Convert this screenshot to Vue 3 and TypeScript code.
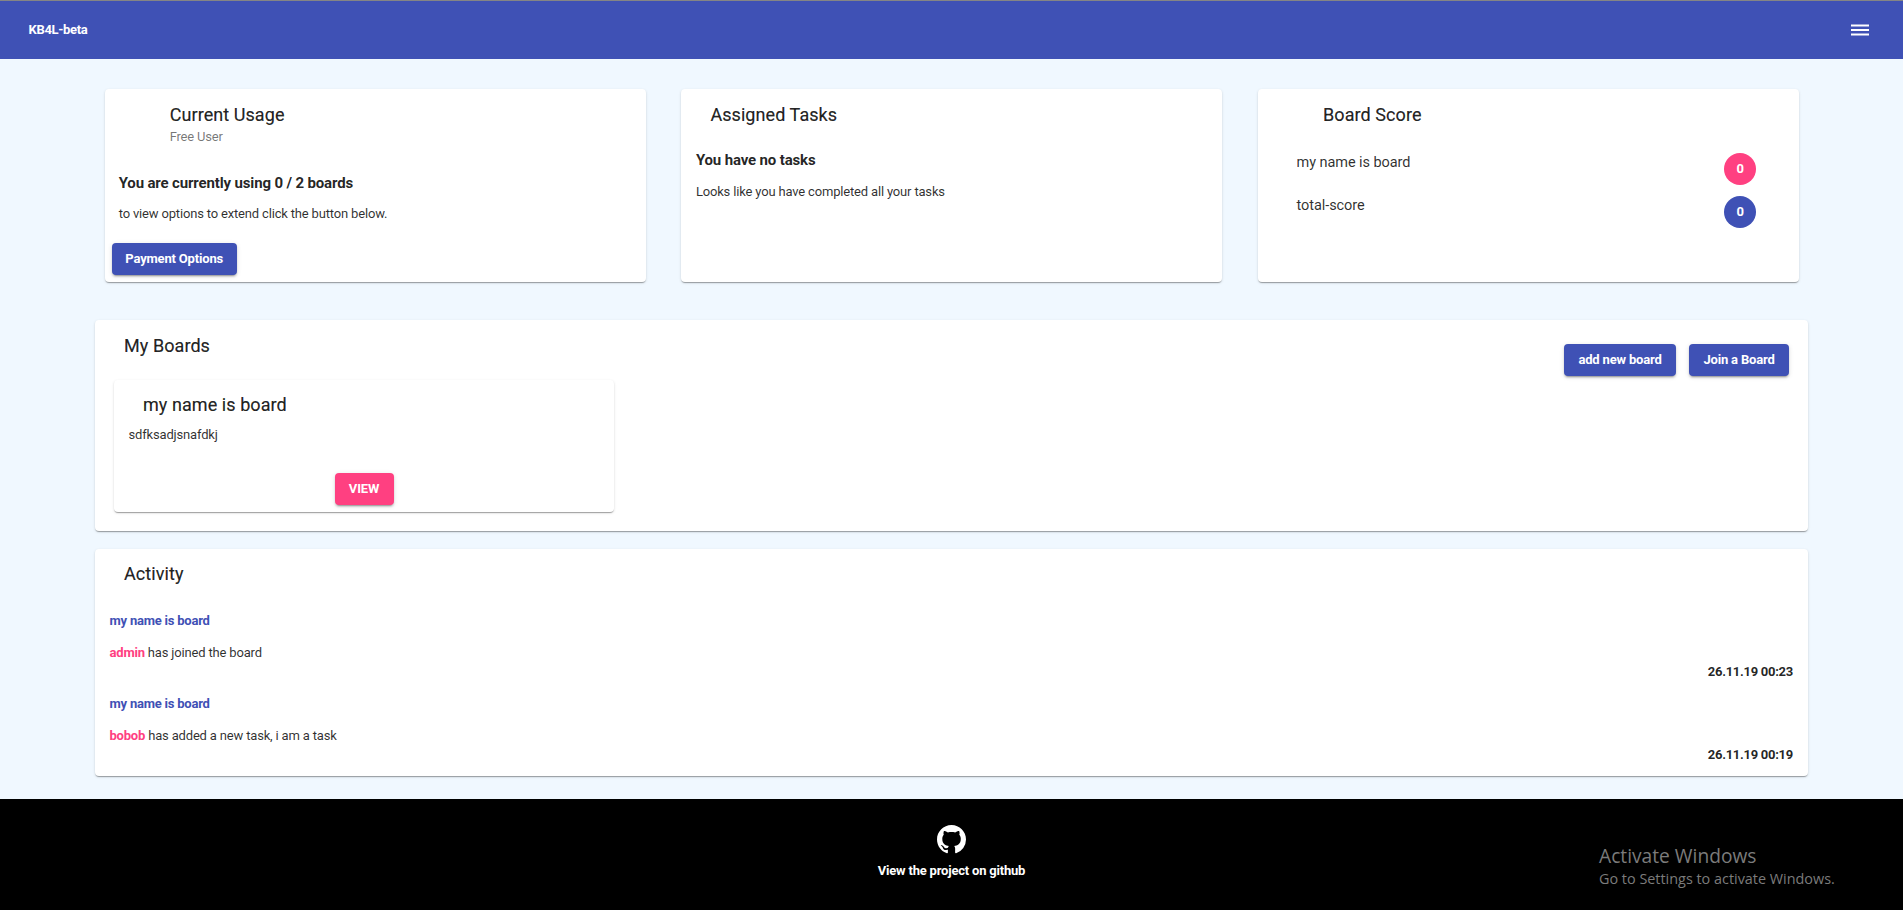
<script setup lang="ts">
interface Score { label: string; value: number; tone: 'pink' | 'indigo' }
interface Entry { board: string; user: string; text: string; date: string }

const scores: Score[] = [
  { label: 'my name is board', value: 0, tone: 'pink' },
  { label: 'total-score', value: 0, tone: 'indigo' },
]
const activity: Entry[] = [
  { board: 'my name is board', user: 'admin', text: 'has joined the board', date: '26.11.19 00:23' },
  { board: 'my name is board', user: 'bobob', text: 'has added a new task, i am a task', date: '26.11.19 00:19' },
]
</script>

<template>
  <div class="page">
    <header class="toolbar">
      <span class="brand">KB4L-beta</span>
      <button class="menu" aria-label="Menu">
        <svg viewBox="0 0 24 24" width="24" height="24"><path fill="#fff" d="M3 6.5h18v2H3zM3 11h18v2H3zM3 15.5h18v2H3z" /></svg>
      </button>
    </header>

    <main class="content">
      <section class="stats">
        <article class="card stat">
          <h2 class="title inset">Current Usage</h2>
          <p class="subtitle">Free User</p>
          <h3 class="lead usage-lead">You are currently using 0 / 2 boards</h3>
          <p class="text usage-text">to view options to extend click the button below.</p>
          <button class="btn payment">Payment Options</button>
        </article>
        <article class="card stat">
          <h2 class="title">Assigned Tasks</h2>
          <h3 class="lead tasks-lead">You have no tasks</h3>
          <p class="text tasks-text">Looks like you have completed all your tasks</p>
        </article>
        <article class="card stat">
          <h2 class="title inset">Board Score</h2>
          <ul class="scores">
            <li v-for="s in scores" :key="s.label">
              <span class="score-label">{{ s.label }}</span>
              <span class="badge" :class="s.tone">{{ s.value }}</span>
            </li>
          </ul>
        </article>
      </section>

      <section class="card boards">
        <div class="boards-head">
          <h2 class="title">My Boards</h2>
          <div class="actions">
            <button class="btn add">add new board</button>
            <button class="btn join">Join a Board</button>
          </div>
        </div>
        <article class="card board">
          <h2 class="title">my name is board</h2>
          <p class="text board-text">sdfksadjsnafdkj</p>
          <button class="btn view">VIEW</button>
        </article>
      </section>

      <section class="card activity">
        <h2 class="title">Activity</h2>
        <div class="entries">
          <div v-for="e in activity" :key="e.date" class="entry">
            <h4 class="entry-board">{{ e.board }}</h4>
            <p class="text entry-text"><b>{{ e.user }}</b> {{ e.text }}</p>
            <time class="entry-date">{{ e.date }}</time>
          </div>
        </div>
      </section>
    </main>

    <footer class="footer">
      <svg class="github" viewBox="0 0 16 16" width="29" height="29"><path fill="#fff" d="M8 0C3.58 0 0 3.58 0 8c0 3.54 2.29 6.53 5.47 7.59.4.07.55-.17.55-.38 0-.19-.01-.82-.01-1.49-2.01.37-2.53-.49-2.69-.94-.09-.23-.48-.94-.82-1.13-.28-.15-.68-.52-.01-.53.63-.01 1.08.58 1.23.82.72 1.21 1.87.87 2.33.66.07-.52.28-.87.51-1.07-1.78-.2-3.64-.89-3.64-3.95 0-.87.31-1.59.82-2.15-.08-.2-.36-1.02.08-2.12 0 0 .67-.21 2.2.82.64-.18 1.32-.27 2-.27s1.36.09 2 .27c1.53-1.04 2.2-.82 2.2-.82.44 1.1.16 1.92.08 2.12.51.56.82 1.27.82 2.15 0 3.07-1.87 3.75-3.65 3.95.29.25.54.73.54 1.48 0 1.07-.01 1.93-.01 2.2 0 .21.15.46.55.38A8.01 8.01 0 0 0 16 8c0-4.42-3.58-8-8-8z" /></svg>
      <span class="footer-text">View the project on github</span>
      <div class="watermark">
        <div class="wm-title">Activate Windows</div>
        <div class="wm-text">Go to Settings to activate Windows.</div>
      </div>
    </footer>
  </div>
</template>

<style>
body { margin: 0; background: #f0f8ff; }
</style>

<style scoped>
.page {
  display: flex;
  flex-direction: column;
  height: 910px;
  overflow: hidden;
  background: #f0f8ff;
  color: rgba(0, 0, 0, 0.87);
  font-family: Roboto, sans-serif;
  font-size: 13px;
}
h2, h3, h4, p, ul { margin: 0; padding: 0; font-weight: 400; }
button { font: inherit; border: 0; padding: 0; background: none; }

.toolbar {
  display: flex;
  flex: none;
  align-items: center;
  justify-content: space-between;
  box-sizing: border-box;
  height: 59px;
  padding: 0 31px 0 28.5px;
  border-top: 1px solid #858585;
  background: #3f51b5;
}
.brand { padding-bottom: 2px; color: #fff; font-weight: 700; letter-spacing: -0.32px; }
.menu { display: flex; }

.content {
  display: flex;
  flex: none;
  flex-direction: column;
  width: 1713px;
  height: 740px;
  margin: 0 auto;
}
.card {
  box-sizing: border-box;
  border-radius: 4px;
  background: #fff;
  box-shadow: 0 2px 1px -1px rgba(0, 0, 0, 0.2), 0 1px 1px 0 rgba(0, 0, 0, 0.14), 0 1px 3px 0 rgba(0, 0, 0, 0.12);
}
.title {
  padding-left: 29px;
  font-size: 18px;
  line-height: 24px;
  letter-spacing: 0.07px;
  -webkit-text-stroke: 0.2px;
}
.title.inset { padding-left: 65px; }
.lead { font-size: 15px; font-weight: 700; line-height: 20px; letter-spacing: -0.15px; }
.text { line-height: 20px; letter-spacing: -0.17px; color: rgba(0, 0, 0, 0.82); }

.stats { display: flex; gap: 35.6px; padding: 30px 0 0 9.7px; }
.stat { display: flex; flex: none; flex-direction: column; width: 541.1px; height: 193px; padding-top: 14px; }
.subtitle { padding-left: 65px; line-height: 20px; color: rgba(0, 0, 0, 0.54); letter-spacing: -0.2px; }
.usage-lead { padding: 26px 0 0 14px; }
.usage-text { padding: 11px 0 0 14px; }
.tasks-lead { padding: 23px 0 0 14.5px; }
.tasks-text { padding: 12px 0 0 14.5px; }

.btn {
  height: 32px;
  border-radius: 4px;
  background: #3f51b5;
  color: #fff;
  font-weight: 700;
  letter-spacing: -0.18px;
  line-height: 32px;
  box-shadow: 0 3px 1px -2px rgba(0, 0, 0, 0.2), 0 2px 2px 0 rgba(0, 0, 0, 0.14), 0 1px 5px 0 rgba(0, 0, 0, 0.12);
}
.payment { width: 125px; margin: 19px 0 0 7px; }
.add { width: 112px; }
.join { width: 100px; }
.view { align-self: center; width: 59px; margin-top: 28px; background: #ff4081; }

.scores { list-style: none; padding: 26px 43px 0 38.5px; }
.scores li { display: flex; justify-content: space-between; height: 43px; }
.score-label {
  font-size: 14.5px;
  line-height: 20px;
  letter-spacing: -0.07px;
  color: rgba(0, 0, 0, 0.82);
}
.badge {
  width: 32px;
  height: 32px;
  border-radius: 50%;
  color: #fff;
  font-weight: 700;
  line-height: 32px;
  text-align: center;
}
.pink { background: #ff4081; }
.indigo { background: #3f51b5; }

.boards { height: 211px; margin-top: 38px; padding-top: 14px; }
.boards-head { display: flex; justify-content: space-between; height: 46px; }
.actions { display: flex; gap: 13px; padding: 10px 19px 0 0; }
.board { display: flex; flex-direction: column; width: 500px; height: 132px; margin-left: 19px; padding-top: 13px; }
.board-text { padding: 8px 0 0 14.5px; }

.activity { height: 227px; margin-top: 18px; padding-top: 13px; }
.entries { padding: 25px 15px 0 14.5px; }
.entry { display: flex; flex-direction: column; height: 83px; }
.entry-board { color: #3f51b5; font-weight: 700; line-height: 20px; letter-spacing: -0.22px; }
.entry-text { margin-top: 12px; }
.entry-text b { color: #ff4081; font-weight: 700; letter-spacing: -0.2px; }
.entry-date { align-self: flex-end; margin-top: -1px; font-weight: 700; line-height: 19px; letter-spacing: -0.27px; }

.footer {
  position: relative;
  display: flex;
  flex: 1;
  flex-direction: column;
  align-items: center;
  box-sizing: border-box;
  padding-top: 26px;
  background: #000;
}
.github { display: block; }
.footer-text { margin-top: 7px; color: #fff; font-weight: 700; line-height: 20px; letter-spacing: -0.2px; }
.watermark {
  position: absolute;
  left: 1599px;
  top: 43px;
  color: #7b7b7b;
  font-family: "Open Sans", sans-serif;
  white-space: nowrap;
}
.wm-title { font-size: 19.2px; line-height: 28px; }
.wm-text { font-size: 14.4px; line-height: 18px; }
</style>
